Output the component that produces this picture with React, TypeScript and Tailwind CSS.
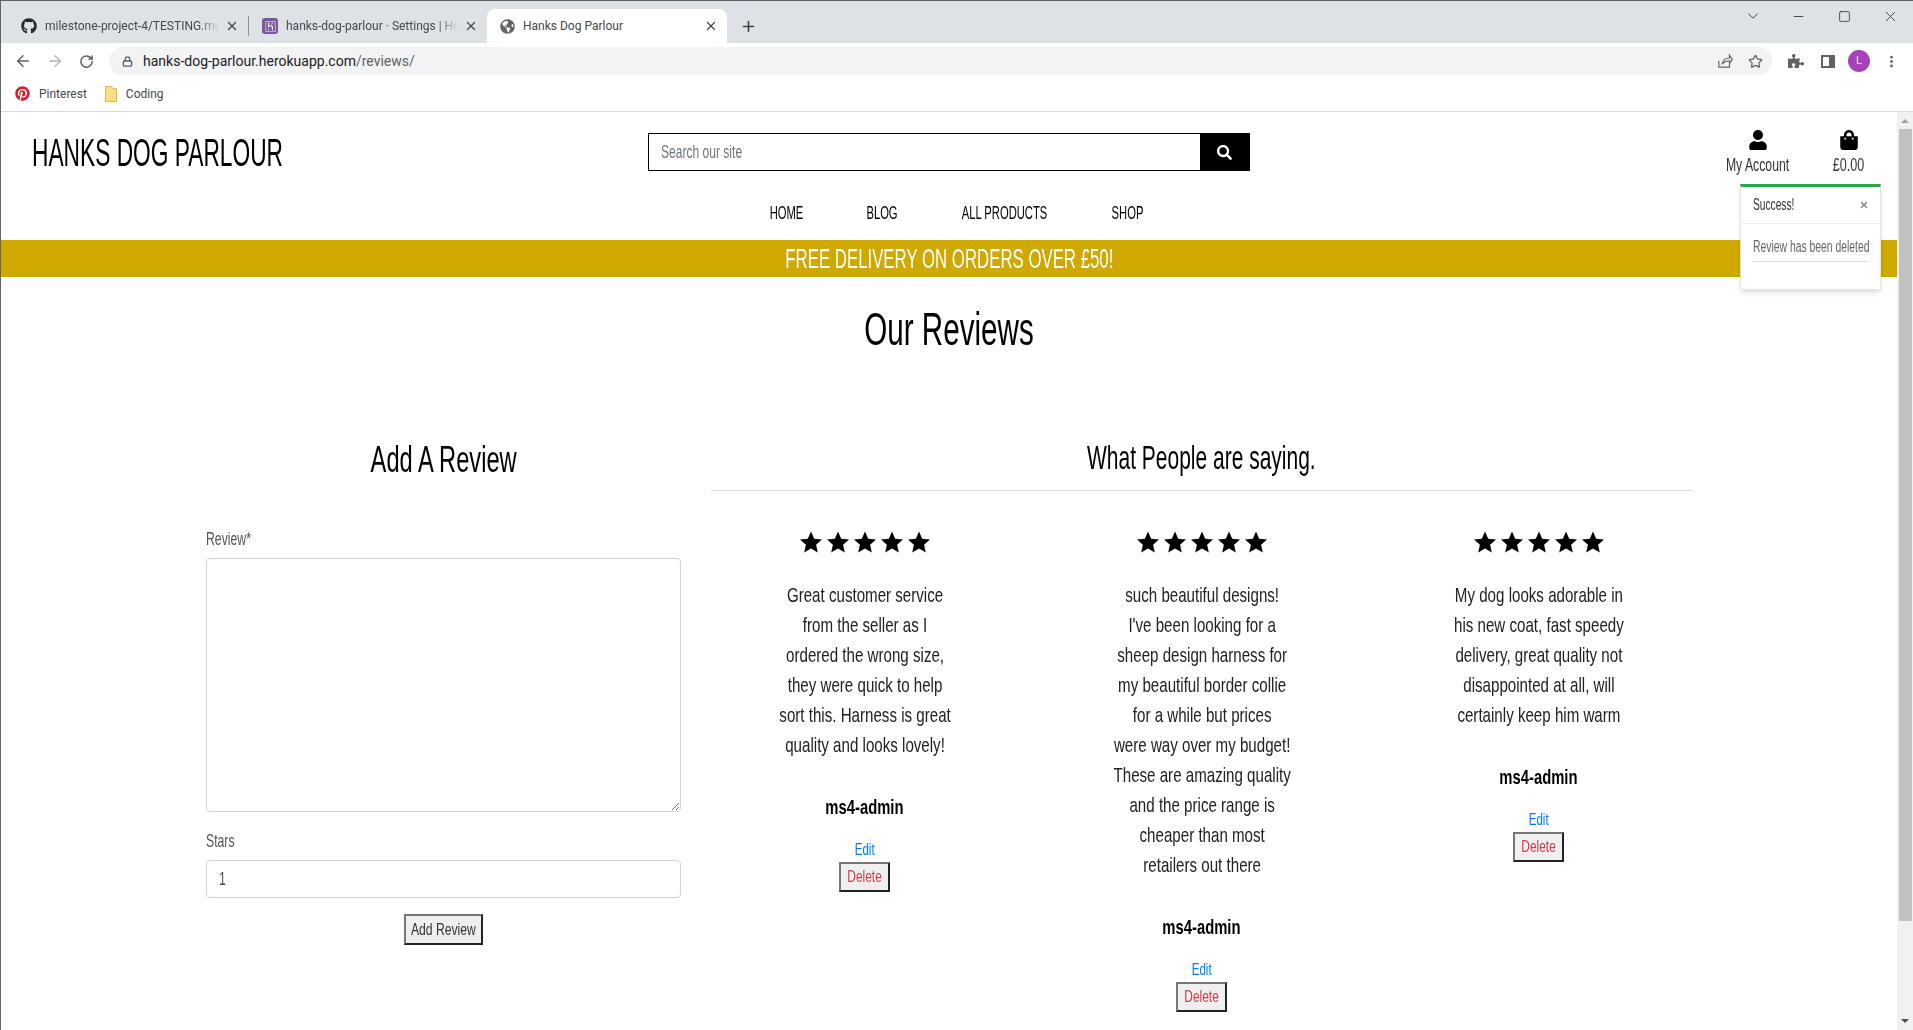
import React from "react";
import { ArrowLeft, ArrowRight, RotateCw, Lock, Star as StarLine, X, Plus, ChevronDown, Minus, Square, MoreVertical } from "lucide-react";
import { FaGithub, FaPinterest, FaGlobeAmericas, FaUser, FaShoppingBag, FaSearch, FaPuzzlePiece } from "react-icons/fa";
import { SiHeroku } from "react-icons/si";

const Tab = ({ icon, title, active, w }: { icon: React.ReactNode; title: string; active?: boolean; w: string }) => (
  <div className={`${w} h-[34px] flex items-center pr-[9px] rounded-t-lg ${active ? "bg-white pl-[12px]" : "pl-[13px]"}`}>
    <span className="w-[16px] flex justify-center shrink-0">{icon}</span>
    <span className={`ml-[8px] flex-1 overflow-hidden whitespace-nowrap text-[12px] text-[#45494d] ${active ? "" : "[mask-image:linear-gradient(to_right,black_88%,transparent)]"}`}>{title}</span>
    <X size={14} strokeWidth={2.2} className="ml-[6px] shrink-0 text-[#44474a]" />
  </div>
);

const Star = () => (
  <svg viewBox="0 0 24 24" width="24" height="24" fill="#000">
    <path d="M12 1.5l3.2 7.2 7.8.8-5.9 5.2 1.7 7.7L12 18.4l-6.8 4 1.7-7.7L1 9.5l7.8-.8z" />
  </svg>
);

const Stars = () => (
  <div className="flex justify-center gap-[3px]">
    <Star /><Star /><Star /><Star /><Star />
  </div>
);

const Review = ({ lines }: { lines: string[] }) => (
  <div className="flex flex-col items-center">
    <div className="mt-[39px]"><Stars /></div>
    <div className="mt-[26px] text-center text-[21px] leading-[30px] text-[#222] whitespace-nowrap scale-x-[0.72]">
      {lines.map((l) => <div key={l}>{l}</div>)}
    </div>
    <div className="mt-[32px] text-[21px] leading-[30px] font-bold text-black scale-x-[0.705]">ms4-admin</div>
    <a className="mt-[16px] text-[17px] leading-[24px] text-[#007bff] scale-x-[0.68]">Edit</a>
    <button className="w-[51px] h-[30px] bg-[#efefef] border-2 border-t-[#767676] border-l-[#767676] border-r-[#222] border-b-[#222] flex items-center justify-center text-[17px] text-[#dc3545]">
      <span className="scale-x-[0.7]">Delete</span>
    </button>
  </div>
);

export default function App() {
  return (
    <div className="w-[1913px] h-[1030px] overflow-hidden flex flex-col bg-white border-l border-[#5f6368]">
      {/* browser chrome */}
      <div className="h-[43px] shrink-0 bg-[#dee1e6] border-t border-[#5f6368] flex items-end pl-[7px] relative font-['Roboto',sans-serif]">
        <Tab w="w-[240px]" icon={<FaGithub size={16} color="#24292e" />} title="milestone-project-4/TESTING.md" />
        <div className="w-px h-[20px] bg-[#8f9297] mb-[7px]" />
        <Tab w="w-[238px]" icon={<span className="w-[16px] h-[16px] rounded-[3px] bg-[#79589f] flex items-center justify-center"><SiHeroku size={11} color="#fff" /></span>} title="hanks-dog-parlour · Settings | Heroku" />
        <Tab w="w-[240px]" active icon={<FaGlobeAmericas size={15} color="#5f6368" />} title="Hanks Dog Parlour" />
        <Plus size={17} strokeWidth={2.2} className="ml-[13px] mb-[8px] text-[#3c4043]" />
        <div className="absolute right-0 top-0 flex items-center text-[#333]">
          <ChevronDown size={18} strokeWidth={1.2} className="mr-[29px] mt-[6px]" />
          <Minus size={15} strokeWidth={1.4} className="mr-[32px] mt-[6px]" />
          <Square size={13} strokeWidth={1.5} className="mr-[31px] mt-[6px]" />
          <X size={17} strokeWidth={1.2} className="mr-[14px] mt-[6px]" />
        </div>
      </div>
      <div className="h-[36px] shrink-0 flex items-center font-['Roboto',sans-serif] text-[#5f6368]">
        <ArrowLeft size={18} className="ml-[13px]" />
        <ArrowRight size={18} className="ml-[14px] text-[#b5b8bb]" />
        <RotateCw size={15} strokeWidth={2.4} className="ml-[15px]" />
        <div className="ml-[15px] w-[1663px] h-[28px] rounded-full bg-[#f1f3f4] flex items-center pl-[13px]">
          <Lock size={11} strokeWidth={3} />
          <span className="ml-[10px] text-[14px] text-[#202124]">hanks-dog-parlour.herokuapp.com<span className="text-[#5f6368]">/reviews/</span></span>
          <svg viewBox="0 0 24 24" width="17" height="17" fill="none" stroke="currentColor" strokeWidth="1.6" className="ml-auto">
            <path d="M4 11v9h15v-5M9 15c1-5 5-8 10-8V3l4 6-4 6v-4c-4 0-7 1-10 4z" />
          </svg>
          <StarLine size={15} strokeWidth={2} className="ml-[15px] mr-[9px]" />
        </div>
        <FaPuzzlePiece size={16} className="ml-[16px]" />
        <div className="ml-[17px] w-[14px] h-[13px] border-2 border-[#5f6368] border-r-[6px]" />
        <div className="ml-[13px] w-[22px] h-[22px] rounded-full bg-[#a742bb] text-[#f3d9f8] text-[11px] flex items-center justify-center">L</div>
        <MoreVertical size={15} strokeWidth={2.6} className="ml-[14px]" />
      </div>
      <div className="h-[33px] shrink-0 flex items-center pb-[3px] border-b border-[#d9d9d9] font-['Roboto',sans-serif] text-[12px] text-[#45494d]">
        <FaPinterest size={15} color="#d3202a" className="ml-[14px]" />
        <span className="ml-[9px]">Pinterest</span>
        <svg viewBox="0 0 12 16" width="12" height="16" className="ml-[18px]" fill="#fdde85" stroke="#e0b84c">
          <path d="M.5.5h6l1.5 2h3.5v13H.5z" />
        </svg>
        <span className="ml-[9px]">Coding</span>
      </div>

      {/* page */}
      <div className="flex-1 flex min-h-0">
        <div className="relative flex-1 overflow-hidden font-['Liberation_Sans',sans-serif]">
          <header className="h-[84px] flex">
            <div className="w-[647px] shrink-0 pl-[31px] pt-[21px] text-[39px] leading-[40px] text-black whitespace-nowrap">
              <span className="inline-block origin-left scale-x-[0.583]">HANKS DOG PARLOUR</span>
            </div>
            <div className="w-[602px] shrink-0 h-[38px] mt-[21px] flex border border-black">
              <div className="flex-1 pl-[12px] text-[18px] leading-[36px] text-[#6c757d]">
                <span className="inline-block origin-left scale-x-[0.67]">Search our site</span>
              </div>
              <div className="w-[49px] bg-black flex items-center justify-center"><FaSearch size={15} color="#fff" /></div>
            </div>
            <div className="flex-1 flex justify-end pr-[2px] pt-[18px] text-[18px] text-[#333] whitespace-nowrap">
              <div className="w-[91px] flex flex-col items-center"><FaUser size={20} color="#000" /><span className="mt-[2px] scale-x-[0.68]">My Account</span></div>
              <div className="w-[92px] flex flex-col items-center"><FaShoppingBag size={20} color="#000" /><span className="mt-[2px] scale-x-[0.7]">£0.00</span></div>
            </div>
          </header>
          <nav className="h-[44px] flex justify-center items-center pl-[15px] pb-[10px] text-[19px] text-black">
            <span className="w-[97px] text-center scale-x-[0.59]">HOME</span>
            <span className="w-[94px] text-center scale-x-[0.59]">BLOG</span>
            <span className="w-[151px] text-center whitespace-nowrap scale-x-[0.59]">ALL PRODUCTS</span>
            <span className="w-[95px] text-center scale-x-[0.59]">SHOP</span>
          </nav>
          <div className="h-[37px] bg-[#cfa800] text-white text-center text-[28px] leading-[37px] whitespace-nowrap">
            <span className="inline-block scale-x-[0.6]">FREE DELIVERY ON ORDERS OVER £50!</span>
          </div>
          <h1 className="mt-[22px] text-center text-[46px] leading-[60px] text-black scale-x-[0.644]">Our Reviews</h1>
          <div className="mx-auto mt-[60px] w-[1516px] grid grid-cols-3">
            <div className="px-[15px]">
              <h2 className="mt-[17px] text-center text-[37px] leading-[48px] text-black scale-x-[0.64]">Add A Review</h2>
              <label className="mt-[42px] block text-[18px] leading-[26px] text-[#555] origin-left scale-x-[0.68]">Review*</label>
              <textarea className="mt-[6px] w-full h-[254px] block border border-[#ced4da] rounded" />
              <label className="mt-[16px] block text-[18px] leading-[26px] text-[#555] origin-left scale-x-[0.68]">Stars</label>
              <div className="mt-[6px] h-[38px] border border-[#ced4da] rounded pl-[12px] text-[18px] leading-[36px] text-[#495057]">
                <span className="inline-block origin-left scale-x-[0.68]">1</span>
              </div>
              <div className="mt-[16px] flex justify-center">
                <button className="w-[79px] h-[31px] bg-[#efefef] border-2 border-t-[#767676] border-l-[#767676] border-r-[#222] border-b-[#222] flex items-center justify-center whitespace-nowrap text-[17px] text-[#333]">
                  <span className="scale-x-[0.715]">Add Review</span>
                </button>
              </div>
            </div>
            <div className="col-span-2">
              <div className="mx-[15px] pt-[18px] pb-[11px] border-b border-[#ddd]">
                <h2 className="text-center text-[33px] leading-[42px] text-black scale-x-[0.636]">What People are saying.</h2>
              </div>
              <div className="grid grid-cols-3">
                <Review lines={["Great customer service", "from the seller as I", "ordered the wrong size,", "they were quick to help", "sort this. Harness is great", "quality and looks lovely!"]} />
                <Review lines={["such beautiful designs!", "I've been looking for a", "sheep design harness for", "my beautiful border collie", "for a while but prices", "were way over my budget!", "These are amazing quality", "and the price range is", "cheaper than most", "retailers out there"]} />
                <Review lines={["My dog looks adorable in", "his new coat, fast speedy", "delivery, great quality not", "disappointed at all, will", "certainly keep him warm"]} />
              </div>
            </div>
          </div>

          {/* toast */}
          <div className="absolute right-[16px] top-[72px] w-[141px] h-[106px] bg-white border border-[#e5e5e5] border-t-[3px] border-t-[#28a745] shadow-md">
            <div className="h-[37px] pl-[12px] pr-[11px] flex items-center justify-between border-b border-[#eee] text-[16px] text-[#333] whitespace-nowrap">
              <span className="inline-block origin-left scale-x-[0.637]">Success!</span>
              <X size={10} strokeWidth={3.5} className="text-[#888]" />
            </div>
            <div className="mx-[12px] h-[38px] pt-[6px] border-b border-[#ddd] text-[16px] leading-[34px] text-[#666] whitespace-nowrap">
              <span className="inline-block origin-left scale-x-[0.648]">Review has been deleted</span>
            </div>
          </div>
        </div>

        {/* scrollbar */}
        <div className="w-[16px] shrink-0 bg-[#f1f1f1] flex flex-col items-center">
          <div className="mt-[7px] w-0 h-0 border-x-[4px] border-x-transparent border-b-[4px] border-b-[#a3a3a3]" />
          <div className="mt-[6px] w-[13px] h-[792px] bg-[#c1c1c1]" />
          <div className="mt-auto mb-[7px] w-0 h-0 border-x-[4px] border-x-transparent border-t-[4px] border-t-[#505050]" />
        </div>
      </div>
    </div>
  );
}
